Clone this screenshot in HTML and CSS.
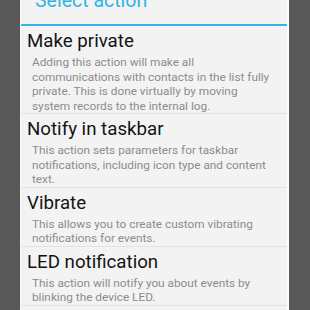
FILE: index.html
```html
<html>
<head>
	<title>Select action</title>
	<link rel="stylesheet" href="styles.css">
</head>
<body>
	<div class="dialog">
		<div class="header">
			<div class="title">Select action</div>
		</div>
		<ul class="actions">
			<li class="action">
				<div class="name">Make private</div>
				<div class="desc">Adding this action will make all communications with contacts in the list fully private. This is done virtually by moving system records to the internal log.</div>
			</li>
			<li class="action">
				<div class="name">Notify in taskbar</div>
				<div class="desc">This action sets parameters for taskbar notifications, including icon type and content text.</div>
			</li>
			<li class="action">
				<div class="name">Vibrate</div>
				<div class="desc">This allows you to create custom vibrating notifications for events.</div>
			</li>
			<li class="action">
				<div class="name">LED notification</div>
				<div class="desc">This action will notify you about events by blinking the device LED.</div>
			</li>
		</ul>
	</div>
</body>
</html>
```

FILE: styles.css
```css
body{
	margin: 0;
	height: 310px;
	overflow: hidden;
	background-color: rgb(88, 88, 88);
	font-family: Roboto, "Noto Sans", sans-serif;
}
.dialog{
	margin-left: 20px;
	width: 266px;
	height: 310px;
	background-color: rgb(243, 243, 243);
	border-left: 1px solid rgb(250, 250, 250);
	border-right: 2px solid rgb(252, 252, 252);
}
.header{
	height: 24px;
	border-bottom: 2px solid rgb(51, 181, 229);
	overflow: hidden;
}
.title{
	margin-top: -10px;
	padding-left: 14px;
	font-size: 19.5px;
	line-height: 22px;
	color: rgb(51, 181, 229);
}
.actions{
	list-style: none;
	margin: 0;
	padding: 0;
}
.action{
	padding: 4px 2px 0 6px;
	border-bottom: 1px solid rgb(226, 226, 226);
}
.name{
	font-size: 18.7px;
	line-height: 22px;
	color: rgb(20, 20, 20);
}
.desc{
	margin-top: 3px;
	padding: 0 8.5px 0 5px;
	font-size: 11.8px;
	line-height: 14.5px;
	color: rgb(140, 140, 140);
}
```
